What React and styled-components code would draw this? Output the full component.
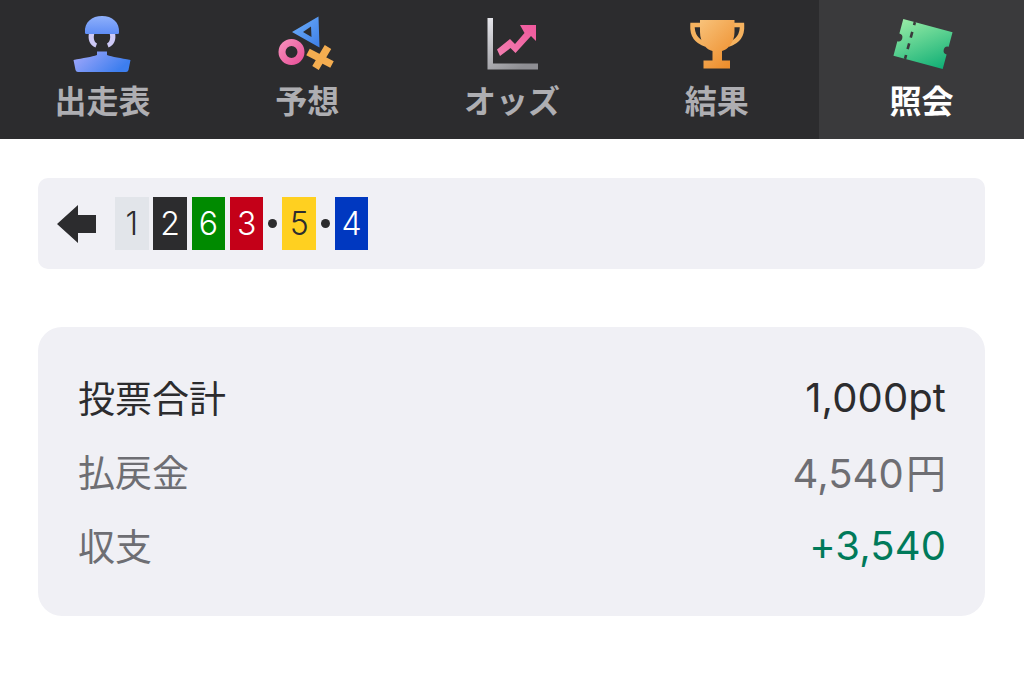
import React from 'react';
import styled, { createGlobalStyle } from 'styled-components';

const GlobalStyle = createGlobalStyle`
  html, body {
    margin: 0;
    padding: 0;
    background: #ffffff;
    font-family: Inter, "Noto Sans CJK JP", sans-serif;
  }
`;

const Page = styled.div`
  width: 1024px;
  height: 674px;
  overflow: hidden;
`;

const Nav = styled.nav`
  display: grid;
  grid-template-columns: repeat(5, 1fr);
  height: 139px;
  background: #2c2c2e;
`;

const Tab = styled.div`
  display: flex;
  flex-direction: column;
  align-items: center;
  padding-top: 12px;
  background: ${(p) => (p.$active ? '#3a3a3c' : 'transparent')};
  color: ${(p) => (p.$active ? '#ffffff' : '#aeaeb2')};
`;

const TabIcon = styled.svg`
  display: block;
  width: 64px;
  height: 64px;
`;

const TabLabel = styled.span`
  font-family: "Noto Sans CJK JP", sans-serif;
  font-size: 32px;
  font-weight: 700;
  line-height: 46px;
`;

const Main = styled.main`
  display: flex;
  flex-direction: column;
  gap: 58px;
  padding: 39px 39px 0 38px;
`;

const TicketBar = styled.div`
  display: flex;
  align-items: center;
  height: 91px;
  padding-left: 19px;
  box-sizing: border-box;
  background: #f0f0f5;
  border-radius: 10px;
`;

const BackArrow = styled.svg`
  width: 39px;
  height: 40px;
  margin-right: 19px;
  fill: #2c2c2e;
`;

const Tile = styled.span`
  display: flex;
  align-items: center;
  justify-content: center;
  width: 33.5px;
  height: 53px;
  font-size: 32px;
  font-weight: 300;
  background: ${(p) => p.$bg};
  color: ${(p) => p.$fg};
  & + & {
    margin-left: 4.8px;
  }
`;

const Dot = styled.span`
  width: 9px;
  height: 9px;
  margin: 0 5px;
  border-radius: 50%;
  background: #2c2c2e;
`;

const Summary = styled.section`
  padding: 33px 39px 34px 40px;
  background: #f0f0f5;
  border-radius: 24px;
`;

const Row = styled.div`
  display: flex;
  justify-content: space-between;
  align-items: center;
  height: 74px;
  color: ${(p) => p.$color};
`;

const RowLabel = styled.span`
  font-family: "Noto Sans CJK JP", sans-serif;
  font-size: 37px;
  color: ${(p) => p.$color};
`;

const RowValue = styled.span`
  font-size: 40px;
  font-weight: 400;
  letter-spacing: 0.1px;
`;

const Yen = styled.span`
  font-family: "Noto Sans CJK JP", sans-serif;
  font-size: 40px;
  margin-left: 2px;
`;

const tiles = [
  { n: 1, bg: '#e2e5ea', fg: '#2c2c2e' },
  { n: 2, bg: '#2c2c2e', fg: '#ffffff' },
  { n: 6, bg: '#008a00', fg: '#ffffff' },
  { n: 3, bg: '#c40018', fg: '#ffffff' },
  { dot: true },
  { n: 5, bg: '#ffd020', fg: '#2c2c2e' },
  { dot: true },
  { n: 4, bg: '#0038c0', fg: '#ffffff' },
];

function PersonIcon() {
  return (
    <TabIcon viewBox="0 0 64 64">
      <defs>
        <linearGradient id="helmet" x1="0" y1="0" x2="0" y2="1">
          <stop offset="0" stopColor="#8fb0fb" />
          <stop offset="1" stopColor="#5f8df5" />
        </linearGradient>
        <linearGradient id="body" x1="0" y1="0" x2="1" y2="0.4">
          <stop offset="0" stopColor="#a7aafc" />
          <stop offset="1" stopColor="#3d7eee" />
        </linearGradient>
      </defs>
      <path d="M19 21 C17.5 28 20 33 25.5 35.5 L27 31.5 C24 30 23 26 24.5 21 Z" fill="#cdc9f6" />
      <path d="M45 21 C46.5 28 44 33 38.5 35.5 L37 31.5 C40 30 41 26 39.5 21 Z" fill="#cdc9f6" />
      <path d="M15 21 C14 10 22 4 32 4 C42 4 50 10 49 21 Q49 22 47.5 22 L16.5 22 Q15 22 15 21 Z" fill="url(#helmet)" />
      <path d="M3.5 48 C13 46 22 45 27 43 L27 39.5 L37 39.5 L37 43 C42 45 51 46 60.5 48 L58.5 58 Q58 60 56 60 L8 60 Q6 60 5.5 58 Z" fill="url(#body)" />
    </TabIcon>
  );
}

function ShapesIcon() {
  return (
    <TabIcon viewBox="0 0 64 64">
      <defs>
        <linearGradient id="tri" x1="0" y1="0" x2="1" y2="1">
          <stop offset="0" stopColor="#6fb0fa" />
          <stop offset="1" stopColor="#3d7ee6" />
        </linearGradient>
        <linearGradient id="ring" x1="0" y1="0" x2="1" y2="1">
          <stop offset="0" stopColor="#f58ab8" />
          <stop offset="1" stopColor="#e9559b" />
        </linearGradient>
      </defs>
      <path fillRule="evenodd" d="M43.5 4.5 L44.5 35.5 L17 20 Z M36 14.5 L28 20 L36.5 25 Z" fill="url(#tri)" />
      <circle cx="16.5" cy="40" r="9.5" fill="none" stroke="url(#ring)" strokeWidth="7" />
      <path d="M53 35 L40.5 56 M33 40 L57 52.5" fill="none" stroke="#f4ad50" strokeWidth="7.5" />
    </TabIcon>
  );
}

function ChartIcon() {
  return (
    <TabIcon viewBox="0 0 64 64">
      <defs>
        <linearGradient id="axis" x1="0" y1="0" x2="0.6" y2="1">
          <stop offset="0" stopColor="#e8e8ed" />
          <stop offset="1" stopColor="#8e8e93" />
        </linearGradient>
        <linearGradient id="arrow" x1="0" y1="1" x2="1" y2="0">
          <stop offset="0" stopColor="#f27fb0" />
          <stop offset="1" stopColor="#f0589c" />
        </linearGradient>
      </defs>
      <path d="M7.5 6 H13 V51.5 H58 V57.5 H7.5 Z" fill="url(#axis)" />
      <path d="M17 37.5 L30 27 L35 32 L44.5 21 L40 13 L56 13 L56 29 L51 24 L35.5 41 L30.5 36 L20 44 Z" fill="url(#arrow)" />
    </TabIcon>
  );
}

function TrophyIcon() {
  return (
    <TabIcon viewBox="0 0 64 64">
      <defs>
        <linearGradient id="cup" x1="0" y1="0" x2="0.7" y2="1">
          <stop offset="0" stopColor="#f8c27a" />
          <stop offset="1" stopColor="#ee8f2e" />
        </linearGradient>
      </defs>
      <path d="M16 13 H7.5 C7 22 10 29 21 32.5 M48.5 13 H57 C57.5 22 54.5 29 43.5 32.5" fill="none" stroke="#f5b25f" strokeWidth="4.5" />
      <path d="M15 8 H49.5 V20 C49.5 31 42 38 37 39 V48.5 H45 V56.5 H18.5 V48.5 H27.5 V39 C22 38 15 31 15 20 Z" fill="url(#cup)" />
    </TabIcon>
  );
}

function TicketIcon() {
  return (
    <TabIcon viewBox="0 0 64 64">
      <defs>
        <linearGradient id="ticket" x1="0" y1="0" x2="1" y2="1">
          <stop offset="0" stopColor="#98eca6" />
          <stop offset="1" stopColor="#0fae75" />
        </linearGradient>
      </defs>
      <g transform="rotate(15 33 32)">
        <path d="M7.5 13 H58.5 V28 A4 4 0 0 0 58.5 36 V51 H7.5 V36 A4 4 0 0 0 7.5 28 Z" fill="url(#ticket)" />
        <path d="M19.5 13 V51" stroke="#3a3a3c" strokeWidth="2.6" strokeDasharray="3 7 6 6 6 6 6" fill="none" />
      </g>
    </TabIcon>
  );
}

const tabs = [
  { label: '出走表', Icon: PersonIcon },
  { label: '予想', Icon: ShapesIcon },
  { label: 'オッズ', Icon: ChartIcon },
  { label: '結果', Icon: TrophyIcon },
  { label: '照会', Icon: TicketIcon, active: true },
];

export default function App() {
  return (
    <Page>
      <GlobalStyle />
      <Nav>
        {tabs.map(({ label, Icon, active }) => (
          <Tab key={label} $active={active}>
            <Icon />
            <TabLabel>{label}</TabLabel>
          </Tab>
        ))}
      </Nav>
      <Main>
        <TicketBar>
          <BackArrow viewBox="0 0 39 40">
            <path d="M0 20 L21 1 V11 H39 V29 H21 V39 Z" />
          </BackArrow>
          {tiles.map((t, i) =>
            t.dot ? <Dot key={i} /> : <Tile key={i} $bg={t.bg} $fg={t.fg}>{t.n}</Tile>
          )}
        </TicketBar>
        <Summary>
          <Row $color="#2c2c2e">
            <RowLabel>投票合計</RowLabel>
            <RowValue>1,000pt</RowValue>
          </Row>
          <Row $color="#6e6e73">
            <RowLabel>払戻金</RowLabel>
            <RowValue>4,540<Yen>円</Yen></RowValue>
          </Row>
          <Row $color="#007a5a">
            <RowLabel $color="#6e6e73">収支</RowLabel>
            <RowValue>+3,540</RowValue>
          </Row>
        </Summary>
      </Main>
    </Page>
  );
}
